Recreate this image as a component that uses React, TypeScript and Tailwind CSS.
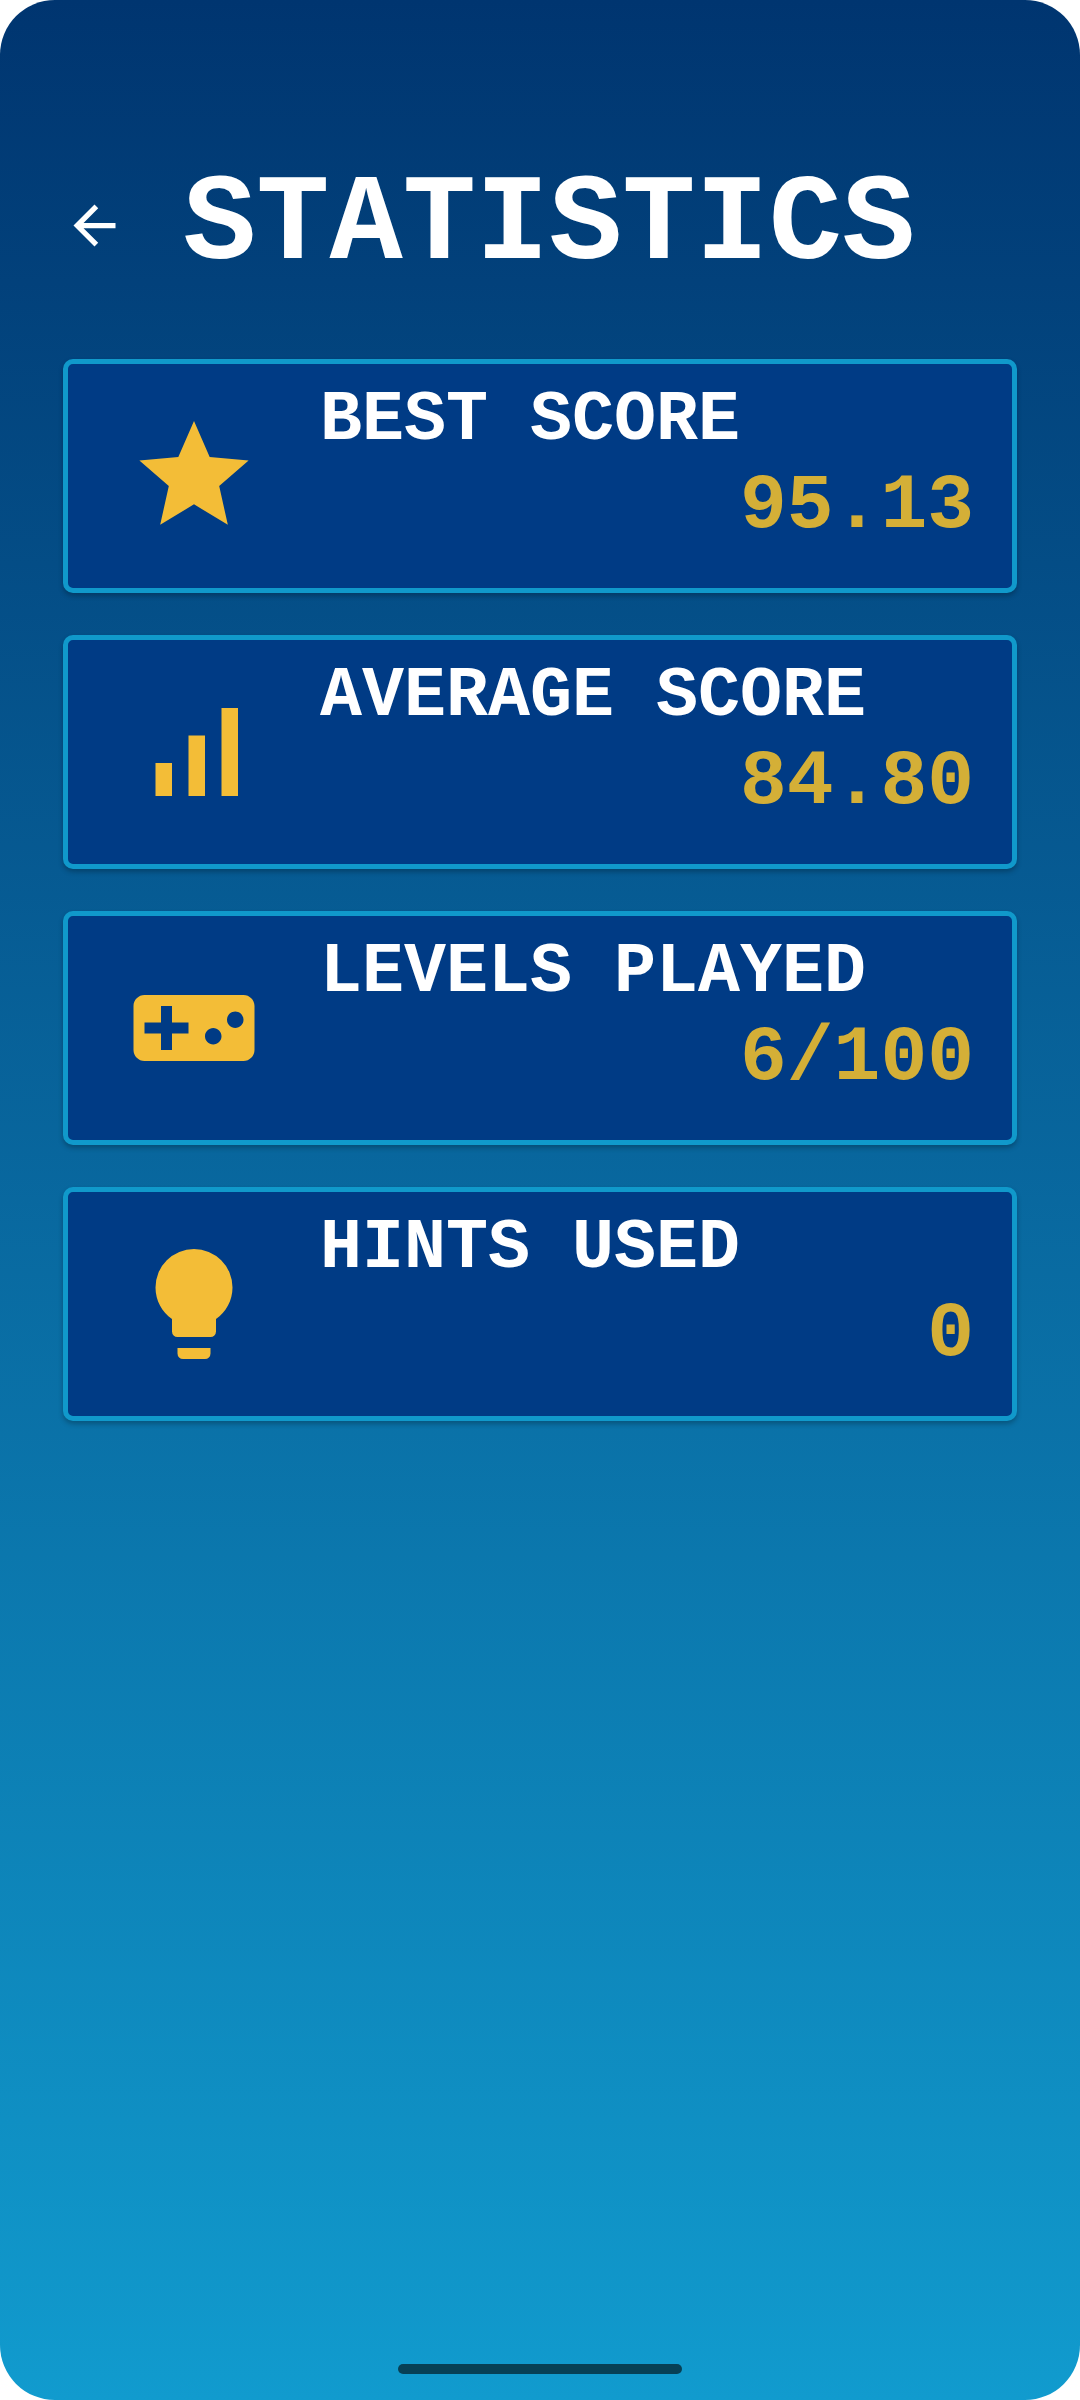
import type { ReactNode } from "react";

type Stat = { label: string; value: string; icon: ReactNode };

const stats: Stat[] = [
  {
    label: "BEST SCORE",
    value: "95.13",
    icon: <path d="M12 2l2.85 6.55 7.08.62-5.35 4.66 1.57 7.05L12 17.15l-6.15 3.73 1.57-7.05-5.35-4.66 7.08-.62z" />,
  },
  {
    label: "AVERAGE SCORE",
    value: "84.80",
    icon: <path d="M5 14h3v6H5zM11 9h3v11h-3zM17 4h3v16h-3z" />,
  },
  {
    label: "LEVELS PLAYED",
    value: "6/100",
    icon: (
      <path d="M21 6H3c-1.1 0-2 .9-2 2v8c0 1.1.9 2 2 2h18c1.1 0 2-.9 2-2V8c0-1.1-.9-2-2-2zm-10 7H8v3H6v-3H3v-2h3V8h2v3h3v2zm4.5 2c-.83 0-1.5-.67-1.5-1.5s.67-1.5 1.5-1.5 1.5.67 1.5 1.5-.67 1.5-1.5 1.5zm4-3c-.83 0-1.5-.67-1.5-1.5s.67-1.5 1.5-1.5 1.5.67 1.5 1.5-.67 1.5-1.5 1.5z" />
    ),
  },
  {
    label: "HINTS USED",
    value: "0",
    icon: (
      <path d="M12 2a7 7 0 0 0-7 7c0 2.38 1.19 4.47 3 5.74V17a1 1 0 0 0 1 1h6a1 1 0 0 0 1-1v-2.26c1.81-1.27 3-3.36 3-5.74a7 7 0 0 0-7-7zM9 21a1 1 0 0 0 1 1h4a1 1 0 0 0 1-1v-1H9z" />
    ),
  },
];

function StatCard({ label, value, icon }: Stat) {
  return (
    <li className="flex min-h-[234px] items-center rounded-[10px] border-[5px] border-[#1099cb] bg-[#003b85] pr-[38px] pl-[60px] shadow-[0_3px_5px_rgba(0,0,0,0.25)]">
      <svg viewBox="0 0 24 24" className="mr-[60px] size-[132px] shrink-0 fill-[#f3bd37]" aria-hidden="true">
        {icon}
      </svg>
      <dl className="flex min-w-0 flex-1 flex-col self-stretch pt-[22px]">
        <dt className="text-[70px] leading-[70px] font-bold whitespace-nowrap text-white">{label}</dt>
        <dd className="pt-[10px] text-right text-[78px] leading-[80px] font-bold whitespace-nowrap text-[#d4af37]">
          {value}
        </dd>
      </dl>
    </li>
  );
}

export default function App() {
  return (
    <div className="min-h-screen bg-white font-['Liberation_Mono',monospace]">
      <div className="flex min-h-screen flex-col rounded-[55px] bg-linear-to-b/srgb from-[#003570] to-[#119bce] px-[63px]">
        <header className="flex h-[359px] items-center pt-[92px]">
          <button type="button" aria-label="Back" className="mr-[57px] size-[63px] shrink-0">
            <svg viewBox="0 0 24 24" className="size-full fill-white" aria-hidden="true">
              <path d="M20 11H7.83l5.59-5.59L12 4l-8 8 8 8 1.41-1.41L7.83 13H20z" />
            </svg>
          </button>
          <h1 className="text-[122px] leading-[122px] font-bold whitespace-nowrap text-white">STATISTICS</h1>
        </header>
        <main className="flex-1">
          <ul className="flex flex-col gap-[42px]">
            {stats.map((stat) => (
              <StatCard key={stat.label} {...stat} />
            ))}
          </ul>
        </main>
        <div className="mx-auto mb-[26px] h-[10px] w-[284px] rounded-full bg-[#074055]" />
      </div>
    </div>
  );
}
